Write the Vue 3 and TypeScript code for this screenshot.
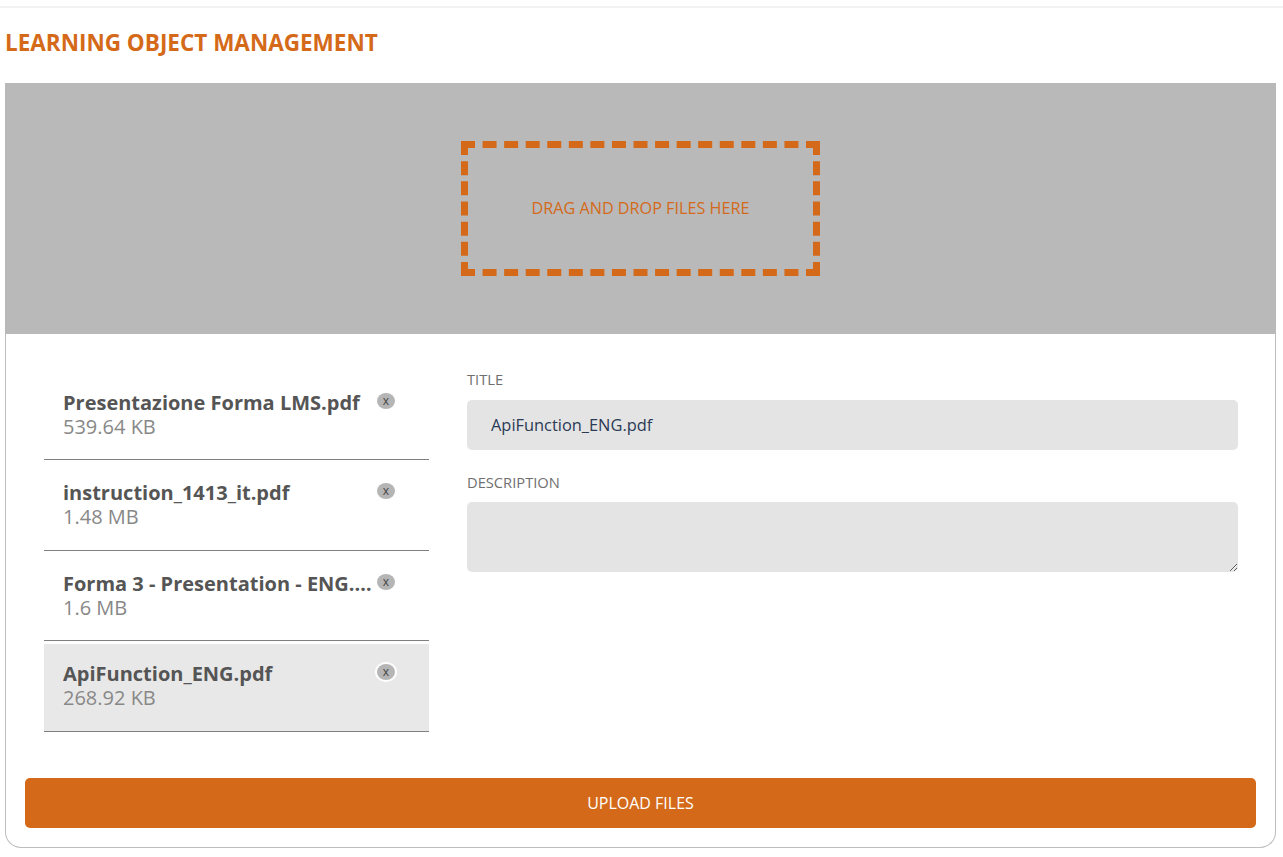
<script setup lang="ts">
interface FileItem {
  name: string
  size: string
  selected?: boolean
}

const files: FileItem[] = [
  { name: 'Presentazione Forma LMS.pdf', size: '539.64 KB' },
  { name: 'instruction_1413_it.pdf', size: '1.48 MB' },
  { name: 'Forma 3 - Presentation - ENG.pdf', size: '1.6 MB' },
  { name: 'ApiFunction_ENG.pdf', size: '268.92 KB', selected: true },
]
</script>

<template>
  <div class="page">
    <div class="topline"></div>
    <h1 class="title">LEARNING OBJECT MANAGEMENT</h1>
    <section class="card">
      <div class="dropzone">
        <div class="dropbox">DRAG AND DROP FILES HERE</div>
      </div>
      <div class="body">
        <ul class="files">
          <li v-for="f in files" :key="f.name" class="file" :class="{ selected: f.selected }">
            <div class="meta">
              <div class="name">{{ f.name }}</div>
              <div class="size">{{ f.size }}</div>
            </div>
            <span class="remove">x</span>
          </li>
        </ul>
        <form class="form">
          <label class="label" for="title">TITLE</label>
          <input id="title" class="field input" type="text" value="ApiFunction_ENG.pdf" />
          <label class="label second" for="description">DESCRIPTION</label>
          <textarea id="description" class="field area"></textarea>
        </form>
      </div>
      <button class="upload" type="button">UPLOAD FILES</button>
    </section>
  </div>
</template>

<style>
html,
body {
  margin: 0;
  background: #fff;
}
</style>

<style scoped>
.page {
  width: 1283px;
  height: 857px;
  box-sizing: border-box;
  padding-top: 6px;
  overflow: hidden;
  font-family: "Open Sans", "Noto Sans", sans-serif;
}
.topline {
  height: 2px;
  background: #f2f2f2;
}
.title {
  margin: 0;
  padding: 20px 0 0 5px;
  height: 55px;
  box-sizing: border-box;
  font-size: 22.5px;
  line-height: 30px;
  font-weight: 700;
  color: #d46a19;
}
.card {
  margin: 20px 0 0 5px;
  width: 1271px;
  height: 765px;
  box-sizing: border-box;
  border: 1px solid #bdbdbd;
  border-top: 0;
  border-radius: 0 0 16px 16px;
  display: flex;
  flex-direction: column;
}
.dropzone {
  margin: 0 -1px;
  height: 251px;
  background: #b9b9b9;
  display: flex;
  align-items: center;
  justify-content: center;
}
.dropbox {
  width: 359px;
  height: 135px;
  box-sizing: border-box;
  border: 7px dashed #d46a19;
  padding-bottom: 2px;
  display: flex;
  align-items: center;
  justify-content: center;
  font-size: 16.2px;
  color: #d46a19;
}
.body {
  display: flex;
  height: 444px;
  box-sizing: border-box;
  padding: 35.5px 0 0 38px;
}
.files {
  list-style: none;
  margin: 0;
  padding: 0;
  width: 385px;
}
.file {
  height: 87.5px;
  margin-top: 3px;
  box-sizing: border-box;
  border-bottom: 1px solid #7f7f7f;
  padding: 18px 34px 0 19px;
  display: flex;
  gap: 3px;
  align-items: flex-start;
}
.file.selected {
  background: #e8e8e8;
}
.meta {
  flex: 1;
  min-width: 0;
}
.name {
  font-size: 20px;
  line-height: 28px;
  margin: -2px 0;
  font-weight: 700;
  color: #555;
  white-space: nowrap;
  overflow: hidden;
  text-overflow: ellipsis;
}
.size {
  font-size: 20px;
  line-height: 24px;
  color: #888;
}
.remove {
  flex: none;
  width: 18px;
  height: 16px;
  margin-top: 2px;
  border-radius: 50%;
  background: #b5b5b5;
  color: #444;
  font-size: 12px;
  line-height: 15px;
  text-align: center;
}
.selected .remove {
  box-shadow: 0 0 0 2px #fff;
}
.form {
  margin: -0.5px 0 0 38px;
  width: 771px;
  display: flex;
  flex-direction: column;
}
.label {
  height: 31px;
  font-size: 14.7px;
  line-height: 20px;
  color: #6f6f6f;
}
.label.second {
  margin-top: 22px;
  height: 30px;
}
.field {
  display: block;
  box-sizing: border-box;
  width: 100%;
  border: 0;
  outline: 0;
  border-radius: 5px;
  background: #e4e4e4;
  font-family: inherit;
  font-size: 16.4px;
  color: #2b3a55;
}
.input {
  height: 50px;
  padding: 0 24px 2px;
}
.area {
  height: 70px;
  padding: 12px 24px;
  resize: vertical;
}
.upload {
  display: block;
  flex: none;
  margin: 0 19px;
  height: 50px;
  border: 0;
  border-radius: 5px;
  background: #d46a19;
  color: #fff;
  font-family: inherit;
  font-size: 16px;
}
</style>
